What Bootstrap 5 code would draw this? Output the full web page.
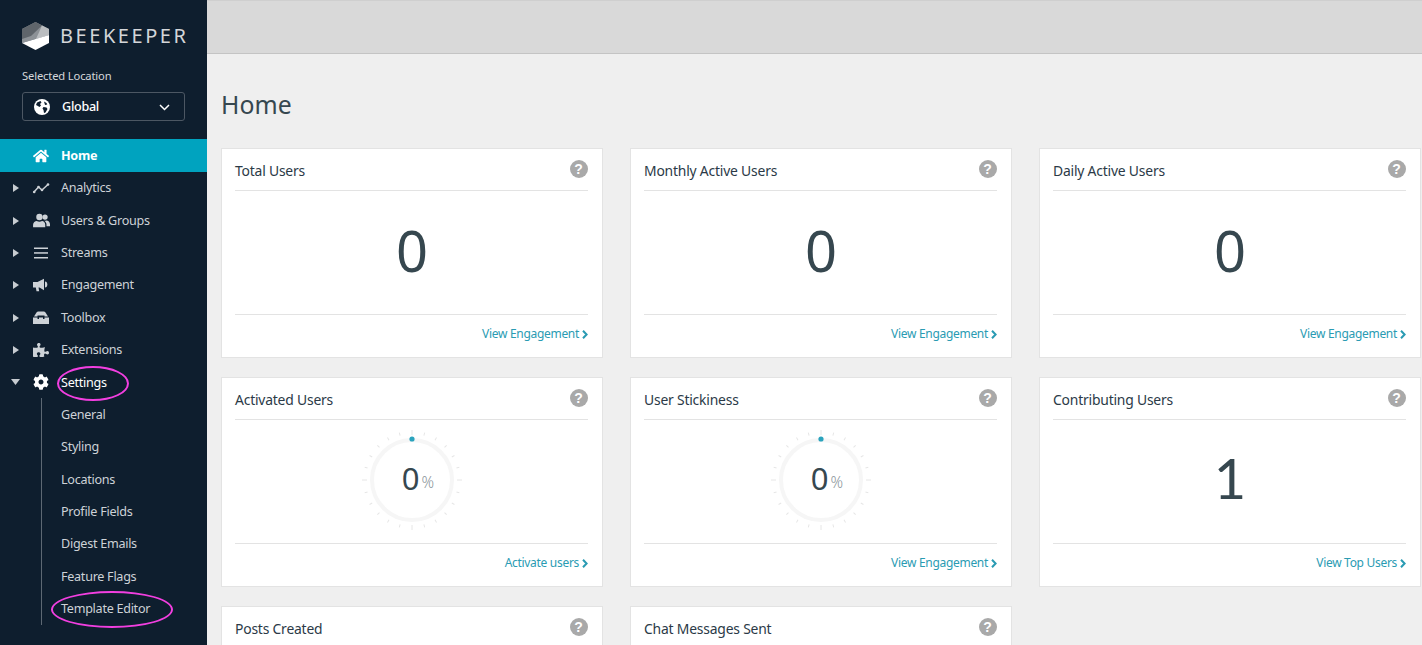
<!doctype html>
<html lang="en">
<head>
<meta charset="utf-8">
<title>Beekeeper</title>
<link href="https://cdn.jsdelivr.net/npm/bootstrap@5.3.0/dist/css/bootstrap.min.css" rel="stylesheet">
<style>
html,body{height:100%;overflow:hidden}
body{font-family:"Noto Sans","Liberation Sans",sans-serif;background:#efefef;color:#2b3a47}
.app-shell{height:645px}
.side{width:207px;flex:none;background:#0e1e2e;color:#cdd2d7;font-size:12.6px;letter-spacing:-.28px}
.brand{padding:22px 22px 0;height:66px;gap:11px}
.brand svg{width:27px;height:28px;flex:none}
.brand-name{font-size:20px;letter-spacing:2.55px;color:#d4d6d9;font-weight:400;line-height:28px}
.loc-label{padding:0 22px;font-size:11.2px;line-height:20px;color:#d5d8db;letter-spacing:-.15px}
.loc-select{margin:6px 22px 18px;height:29px;border:1px solid #4c5763;border-radius:3px;padding:1.5px 14px 0 11px;color:#fff;font-weight:500}
.loc-select .glb{width:16px;height:16px;margin-right:12px}
.nav-row{height:32.35px;position:relative;padding-left:61px;padding-top:1.4px}
.nav-row.on{background:#00a3bf;color:#fff;font-weight:700;height:33px}
.nav-row.lit{color:#fff;padding-top:2px}
.nav-row .ico{position:absolute;left:33px;top:50%;transform:translateY(-50%);width:16px;height:16px;fill:currentColor}
.nav-row .wide-ico{left:32px;width:18px}
.nav-row .car{position:absolute;left:13px;top:50%;transform:translateY(-50%);width:6px;height:8px;fill:#c7ccd1}
.nav-row .car.dn{left:11px;width:9px;height:6px}
.sub-list{margin:0 0 0 41px;padding:0;border-left:1px solid #5d6873;height:227px}
.sub-list .nav-row{padding-left:19px}
.ring-mark{position:absolute;border:2px solid #f23fe0;border-radius:50%;pointer-events:none}
.ring-a{left:57px;top:-.5px;width:72px;height:35px}
.ring-b{left:9px;top:-1.5px;width:122px;height:37px}
.top-strip{height:54px;background:#d9d9d9;border-top:1px solid #cfcfcf;border-bottom:1px solid #c4c4c4;flex:none}
.main-pane{min-width:0;flex:1}
.page-pad{padding:0 1px 0 14px}
.page-title{font-size:24.8px;font-weight:400;color:#36474f;margin:33px 0 27px;line-height:34px;letter-spacing:.1px}
.dash-row{--bs-gutter-x:27px;--bs-gutter-y:19px}
.stat-card{height:210px;border:1px solid #e3e3e3;border-radius:0;background:#fff}
.stat-card .card-header{background:none;border-bottom:1px solid #e3e3e3;margin:0 14px 0 13px;padding:4px 0 0;height:42px;border-radius:0;color:#2b3a47;font-size:13.9px;letter-spacing:-.2px}
.help-dot{width:18px;height:18px;border-radius:50%;background:#a9a9a9;color:#fff;font-weight:700;font-size:14px;line-height:18px;text-align:center;margin:-5px .5px 0 0;font-family:"Liberation Sans",sans-serif;letter-spacing:0}
.stat-card .card-body{padding:0;min-height:0;color:#36474f}
.big-num{font-size:56px;font-weight:400;line-height:1;letter-spacing:0;padding-bottom:6px}
.big-one{font-family:Lato,sans-serif;padding-bottom:7px}
.gauge{position:relative;width:100px;height:100px;margin-bottom:4px}
.gauge svg{width:100px;height:100px;display:block}
.gauge-val{position:absolute;inset:0;padding:0 0 2px 12px}
.gauge-val b{font-size:31px;font-weight:400;line-height:1}
.gauge-val i{font-style:normal;font-size:15.5px;color:#8b959a;font-weight:300;margin:9px 0 0 2px}
.stat-card .card-footer{background:none;border-top:1px solid #e3e3e3;margin:0 14px 0 13px;padding:0 0 4px;height:43px;border-radius:0;font-size:12px;letter-spacing:-.3px;color:#2a9bb3}
.stat-card .card-footer svg{width:6px;height:9px;margin-left:3px;fill:none;stroke:#2a9bb3;stroke-width:2}
</style>
</head>
<body>
<svg width="0" height="0" class="position-absolute">
  <defs>
    <g id="tick-q" stroke="#e6e6e6" stroke-width="1">
      <line x1="50" y1="0" x2="50" y2="5"/>
      <line x1="50" y1="1" x2="50" y2="4" transform="rotate(15 50 50)"/>
      <line x1="50" y1="1" x2="50" y2="4" transform="rotate(30 50 50)"/>
      <line x1="50" y1="1" x2="50" y2="4" transform="rotate(45 50 50)"/>
      <line x1="50" y1="1" x2="50" y2="4" transform="rotate(60 50 50)"/>
      <line x1="50" y1="1" x2="50" y2="4" transform="rotate(75 50 50)"/>
    </g>
    <symbol id="gauge-art" viewBox="0 0 100 100">
      <use href="#tick-q"/>
      <use href="#tick-q" transform="rotate(90 50 50)"/>
      <use href="#tick-q" transform="rotate(180 50 50)"/>
      <use href="#tick-q" transform="rotate(270 50 50)"/>
      <circle cx="50" cy="50" r="40" fill="none" stroke="#f6f6f6" stroke-width="4"/>
      <circle cx="50" cy="9" r="2.600" fill="#2aa3bd"/>
    </symbol>
    <symbol id="car-r" viewBox="0 0 6 8"><path d="M0 0l6 4-6 4z"/></symbol>
    <symbol id="chev" viewBox="0 0 6 9"><path d="M1 .8l3.6 3.7L1 8.2"/></symbol>
  </defs>
</svg>
<div class="app-shell d-flex">
  <aside class="side d-flex flex-column">
    <div class="brand d-flex align-items-start">
      <svg viewBox="0 0 27 28">
        <path fill="#8d9297" d="M13.500 0 27 7v6L0 21V7z"/>
        <path fill="#5f656b" d="M13.500 0 20 3.400 9 14 0 17V7z"/>
        <path fill="#babdc0" d="M20 3.400 27 7v6L14 17z"/>
        <path fill="#fff" d="M27 13V21l-13.500 7L0 21z"/>
      </svg>
      <span class="brand-name">BEEKEEPER</span>
    </div>
    <div class="loc-label">Selected Location</div>
    <div class="loc-select d-flex align-items-center">
      <svg class="glb" viewBox="0 0 16 16"><circle cx="8" cy="8" r="8" fill="#fff"/><path fill="#0e1e2e" d="M3 3.500 6.500 2l1 1.500L6 5l1 1.500L5.500 8 3 6.500 2 6zM9.500 8l3 .5 1 1.500-2 3.500-1.500.5-.5-3-1-1.500zM10 2.500l2.500 1.500.8 1.500-2.300.5z"/></svg>
      <span class="flex-grow-1">Global</span>
      <svg width="11" height="7" viewBox="0 0 11 7" fill="none" stroke="#fff" stroke-width="1.500"><path d="M1 1l4.500 4.500L10 1"/></svg>
    </div>
    <div class="nav-row on d-flex align-items-center">
      <svg class="ico" viewBox="0 0 576 512"><path d="M280.37 148.26L96 300.11V464a16 16 0 0 0 16 16l112.06-.29a16 16 0 0 0 15.92-16V368a16 16 0 0 1 16-16h64a16 16 0 0 1 16 16v95.64a16 16 0 0 0 16 16.05L464 480a16 16 0 0 0 16-16V300L295.67 148.26a12.19 12.19 0 0 0-15.3 0zM571.6 251.47L488 182.56V44.05a12 12 0 0 0-12-12h-56a12 12 0 0 0-12 12v72.61L318.47 43a48 48 0 0 0-61 0L4.34 251.47a12 12 0 0 0-1.6 16.9l25.5 31A12 12 0 0 0 45.15 301l235.22-193.74a12.19 12.19 0 0 1 15.3 0L530.9 301a12 12 0 0 0 16.9-1.6l25.5-31a12 12 0 0 0-1.7-16.93z"/></svg>
      Home
    </div>
    <div class="nav-row d-flex align-items-center">
      <svg class="car"><use href="#car-r"/></svg>
      <svg class="ico wide-ico" viewBox="0 0 16 16"><path fill="none" stroke="currentColor" stroke-width="1.500" d="M1 12 5.500 7l3.500 3L15 4.500"/><circle cx="5.500" cy="7" r="1.300"/><circle cx="9" cy="10" r="1.300"/><circle cx="15" cy="4.500" r="1.300"/><circle cx="1.200" cy="12" r="1.300"/></svg>
      Analytics
    </div>
    <div class="nav-row d-flex align-items-center">
      <svg class="car"><use href="#car-r"/></svg>
      <svg class="ico wide-ico" viewBox="0 0 17 14"><circle cx="7" cy="3.200" r="3"/><circle cx="12.300" cy="3.300" r="2.500"/><path d="M1 13v-2.500C1 8.300 3 7 4.500 7c1.500.8 3.500.8 5 0 1.500 0 3 1.300 3 3.500V13z"/><path d="M11.500 6.500c.8.300 1.500.300 2 0 1.800 0 3.500 1.500 3.500 3.500v2h-3.300v-1.500c0-1.500-.8-3-2.200-4z"/></svg>
      Users &amp; Groups
    </div>
    <div class="nav-row d-flex align-items-center">
      <svg class="car"><use href="#car-r"/></svg>
      <svg class="ico" viewBox="0 0 16 16"><rect x="1" y="2.500" width="14" height="1.500"/><rect x="1" y="7.200" width="14" height="1.500"/><rect x="1" y="12" width="14" height="1.500"/></svg>
      Streams
    </div>
    <div class="nav-row d-flex align-items-center">
      <svg class="car"><use href="#car-r"/></svg>
      <svg class="ico" viewBox="0 0 16 14"><path d="M0 4h4.500L11 .8v11.400L6.500 9.500H5.500l.7 3.700H3.500L2.800 9.500H0z"/><path d="M12 3.500c1.500 0 2.300 1.300 2.300 3s-.8 3-2.300 3z"/></svg>
      Engagement
    </div>
    <div class="nav-row d-flex align-items-center">
      <svg class="car"><use href="#car-r"/></svg>
      <svg class="ico" viewBox="0 0 16 14"><path d="M1 5.500 3.500 1.500C4 .8 4.500.5 5.300.5h5.400c.8 0 1.300.3 1.800 1L15 5.500H11.500V4.500h-7V5.500z"/><path d="M0 6.500h4.500v1.500h1.500V6.500h4v1.500h1.500V6.500H16V13H0z"/></svg>
      Toolbox
    </div>
    <div class="nav-row d-flex align-items-center">
      <svg class="car"><use href="#car-r"/></svg>
      <svg class="ico" viewBox="0 0 576 512"><path d="M519.442 288.651c-41.519 0-59.5 31.593-82.058 31.593C377.409 320.244 432 144 432 144s-196.288 80-196.288-3.297c0-35.827 36.288-46.25 36.288-85.985C272 19.216 243.885 0 210.539 0c-34.654 0-66.366 18.891-66.366 56.346 0 41.364 31.711 59.277 31.711 81.75C175.885 207.719 0 166.758 0 166.758v333.237s178.635 41.047 178.635-28.662c0-22.473-40-40.107-40-81.471 0-37.456 29.25-56.346 63.577-56.346 33.673 0 61.788 19.216 61.788 54.717 0 39.735-36.288 50.158-36.288 85.985 0 60.803 129.675 25.73 181.23 25.73 0 0-34.725-120.101 25.827-120.101 35.962 0 46.423 36.152 86.308 36.152C556.712 416 576 387.99 576 354.443c0-34.199-18.962-65.792-56.558-65.792z"/></svg>
      Extensions
    </div>
    <div class="nav-row lit d-flex align-items-center">
      <svg class="car dn" viewBox="0 0 9 6"><path d="M0 0h9L4.500 6z"/></svg>
      <svg class="ico" viewBox="0 0 512 512"><path d="M487.4 315.7l-42.6-24.6c4.3-23.2 4.3-47 0-70.2l42.6-24.6c4.9-2.8 7.1-8.6 5.5-14-11.1-35.6-30-67.8-54.7-94.6-3.8-4.1-10-5.1-14.8-2.3L380.8 110c-17.9-15.4-38.5-27.3-60.8-35.1V25.8c0-5.6-3.9-10.5-9.4-11.7-36.7-8.2-74.3-7.8-109.2 0-5.5 1.2-9.4 6.1-9.4 11.7V75c-22.2 7.9-42.8 19.8-60.8 35.1L88.7 85.5c-4.9-2.8-11-1.9-14.8 2.3-24.7 26.7-43.6 58.9-54.7 94.6-1.7 5.4.6 11.2 5.5 14L67.3 221c-4.3 23.2-4.3 47 0 70.2l-42.6 24.6c-4.9 2.8-7.1 8.6-5.5 14 11.1 35.6 30 67.8 54.7 94.6 3.8 4.1 10 5.1 14.8 2.3l42.6-24.6c17.9 15.4 38.5 27.3 60.8 35.1v49.2c0 5.6 3.9 10.5 9.4 11.7 36.7 8.2 74.3 7.8 109.2 0 5.5-1.2 9.4-6.1 9.4-11.7v-49.2c22.2-7.9 42.8-19.8 60.8-35.1l42.6 24.6c4.9 2.8 11 1.9 14.8-2.3 24.7-26.7 43.6-58.9 54.7-94.6 1.5-5.5-.7-11.3-5.6-14.1zM256 336c-44.1 0-80-35.9-80-80s35.9-80 80-80 80 35.9 80 80-35.9 80-80 80z"/></svg>
      Settings
      <span class="ring-mark ring-a"></span>
    </div>
    <div class="sub-list">
      <div class="nav-row d-flex align-items-center">General</div>
      <div class="nav-row d-flex align-items-center">Styling</div>
      <div class="nav-row d-flex align-items-center">Locations</div>
      <div class="nav-row d-flex align-items-center">Profile Fields</div>
      <div class="nav-row d-flex align-items-center">Digest Emails</div>
      <div class="nav-row d-flex align-items-center">Feature Flags</div>
      <div class="nav-row d-flex align-items-center">Template Editor<span class="ring-mark ring-b"></span></div>
    </div>
  </aside>
  <main class="main-pane d-flex flex-column">
    <div class="top-strip"></div>
    <div class="page-pad">
      <h1 class="page-title">Home</h1>
      <div class="row dash-row">
        <div class="col-4"><div class="card stat-card">
          <div class="card-header d-flex justify-content-between align-items-center"><span>Total Users</span><span class="help-dot">?</span></div>
          <div class="card-body d-flex align-items-center justify-content-center"><span class="big-num">0</span></div>
          <div class="card-footer d-flex justify-content-end align-items-center">View Engagement<svg><use href="#chev"/></svg></div>
        </div></div>
        <div class="col-4"><div class="card stat-card">
          <div class="card-header d-flex justify-content-between align-items-center"><span>Monthly Active Users</span><span class="help-dot">?</span></div>
          <div class="card-body d-flex align-items-center justify-content-center"><span class="big-num">0</span></div>
          <div class="card-footer d-flex justify-content-end align-items-center">View Engagement<svg><use href="#chev"/></svg></div>
        </div></div>
        <div class="col-4"><div class="card stat-card">
          <div class="card-header d-flex justify-content-between align-items-center"><span>Daily Active Users</span><span class="help-dot">?</span></div>
          <div class="card-body d-flex align-items-center justify-content-center"><span class="big-num">0</span></div>
          <div class="card-footer d-flex justify-content-end align-items-center">View Engagement<svg><use href="#chev"/></svg></div>
        </div></div>
        <div class="col-4"><div class="card stat-card">
          <div class="card-header d-flex justify-content-between align-items-center"><span>Activated Users</span><span class="help-dot">?</span></div>
          <div class="card-body d-flex align-items-center justify-content-center"><div class="gauge"><svg><use href="#gauge-art"/></svg><div class="gauge-val d-flex align-items-center justify-content-center"><b>0</b><i>%</i></div></div></div>
          <div class="card-footer d-flex justify-content-end align-items-center">Activate users<svg><use href="#chev"/></svg></div>
        </div></div>
        <div class="col-4"><div class="card stat-card">
          <div class="card-header d-flex justify-content-between align-items-center"><span>User Stickiness</span><span class="help-dot">?</span></div>
          <div class="card-body d-flex align-items-center justify-content-center"><div class="gauge"><svg><use href="#gauge-art"/></svg><div class="gauge-val d-flex align-items-center justify-content-center"><b>0</b><i>%</i></div></div></div>
          <div class="card-footer d-flex justify-content-end align-items-center">View Engagement<svg><use href="#chev"/></svg></div>
        </div></div>
        <div class="col-4"><div class="card stat-card">
          <div class="card-header d-flex justify-content-between align-items-center"><span>Contributing Users</span><span class="help-dot">?</span></div>
          <div class="card-body d-flex align-items-center justify-content-center"><span class="big-num big-one">1</span></div>
          <div class="card-footer d-flex justify-content-end align-items-center">View Top Users<svg><use href="#chev"/></svg></div>
        </div></div>
        <div class="col-4"><div class="card stat-card">
          <div class="card-header d-flex justify-content-between align-items-center"><span>Posts Created</span><span class="help-dot">?</span></div>
        </div></div>
        <div class="col-4"><div class="card stat-card">
          <div class="card-header d-flex justify-content-between align-items-center"><span>Chat Messages Sent</span><span class="help-dot">?</span></div>
        </div></div>
      </div>
    </div>
  </main>
</div>
<script src="https://cdn.jsdelivr.net/npm/bootstrap@5.3.0/dist/js/bootstrap.bundle.min.js"></script>
</body>
</html>
